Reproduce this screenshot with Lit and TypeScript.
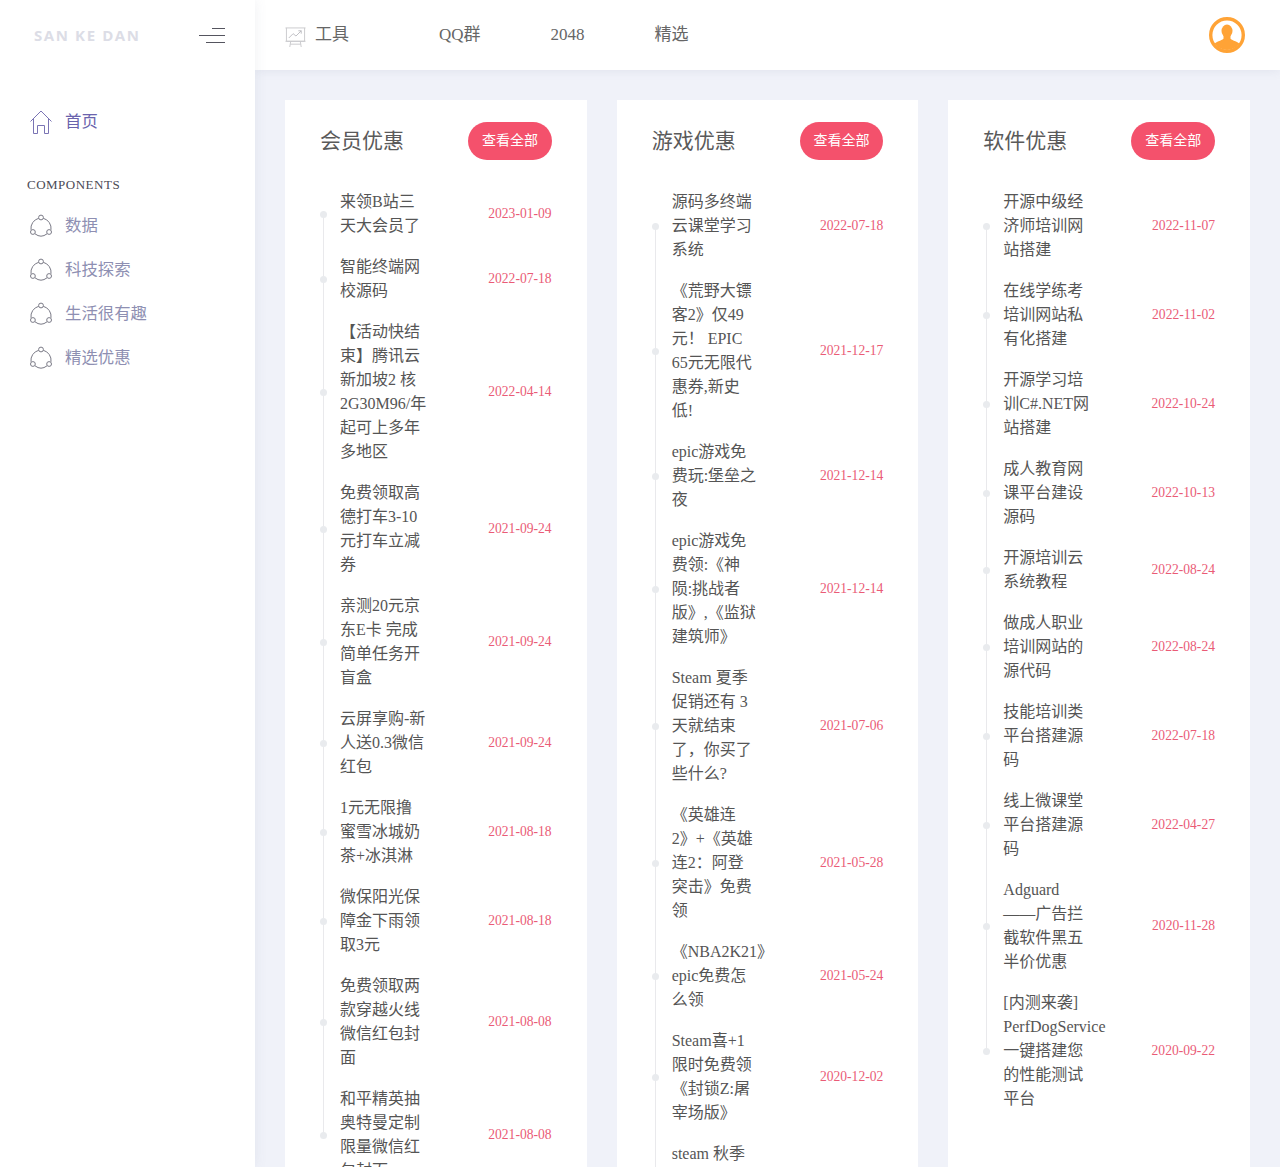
import { LitElement, html, css, svg } from "lit";
import { customElement } from "lit/decorators.js";

type Row = [string, string];
const cards: { title: string; rows: Row[] }[] = [
  {
    title: "会员优惠",
    rows: [
      ["来领B站三|天大会员了", "2023-01-09"],
      ["智能终端网|校源码", "2022-07-18"],
      ["【活动快结|束】腾讯云|新加坡2 核|2G30M96/年|起可上多年|多地区", "2022-04-14"],
      ["免费领取高|德打车3-10|元打车立减|券", "2021-09-24"],
      ["亲测20元京|东E卡 完成|简单任务开|盲盒", "2021-09-24"],
      ["云屏享购-新|人送0.3微信|红包", "2021-09-24"],
      ["1元无限撸|蜜雪冰城奶|茶+冰淇淋", "2021-08-18"],
      ["微保阳光保|障金下雨领|取3元", "2021-08-18"],
      ["免费领取两|款穿越火线|微信红包封|面", "2021-08-08"],
      ["和平精英抽|奥特曼定制|限量微信红|包封面", "2021-08-08"],
    ],
  },
  {
    title: "游戏优惠",
    rows: [
      ["源码多终端|云课堂学习|系统", "2022-07-18"],
      ["《荒野大镖|客2》仅49|元！ EPIC|65元无限代|惠券,新史|低!", "2021-12-17"],
      ["epic游戏免|费玩:堡垒之|夜", "2021-12-14"],
      ["epic游戏免|费领:《神|陨:挑战者|版》,《监狱|建筑师》", "2021-12-14"],
      ["Steam 夏季|促销还有 3|天就结束|了，你买了|些什么?", "2021-07-06"],
      ["《英雄连|2》+《英雄|连2：阿登|突击》免费|领", "2021-05-28"],
      ["《NBA2K21》|epic免费怎|么领", "2021-05-24"],
      ["Steam喜+1|限时免费领|《封锁Z:屠|宰场版》", "2020-12-02"],
      ["steam 秋季|促销开启|多款游戏|史低", "2020-11-26"],
    ],
  },
  {
    title: "软件优惠",
    rows: [
      ["开源中级经|济师培训网|站搭建", "2022-11-07"],
      ["在线学练考|培训网站私|有化搭建", "2022-11-02"],
      ["开源学习培|训C#.NET网|站搭建", "2022-10-24"],
      ["成人教育网|课平台建设|源码", "2022-10-13"],
      ["开源培训云|系统教程", "2022-08-24"],
      ["做成人职业|培训网站的|源代码", "2022-08-24"],
      ["技能培训类|平台搭建源|码", "2022-07-18"],
      ["线上微课堂|平台搭建源|码", "2022-04-27"],
      ["Adguard|——广告拦|截软件黑五|半价优惠", "2020-11-28"],
      ["[内测来袭]|PerfDogService|一键搭建您|的性能测试|平台", "2020-09-22"],
    ],
  },
];

const homeIcon = svg`<svg class="ico" viewBox="0 0 22 24" fill="none" stroke="#7a74b4" stroke-width="1">
  <path d="M.5 11.500 11 1l10.500 10.500"/><path d="M3.500 8.500V23.500H7.500V15.500H14.500V23.500H18.500V8.500"/></svg>`;
const cycleIcon = svg`<svg class="ico" viewBox="0 0 22 24" fill="none" stroke="#7a7a86" stroke-width="1">
  <circle cx="11" cy="3.500" r="2.400"/><circle cx="2.900" cy="18" r="2.400"/><circle cx="19.100" cy="18" r="2.400"/>
  <path d="M8.700 4.300A10.500 10.500 0 0 0 1 15.800M13.300 4.300A10.500 10.500 0 0 1 21 15.800M5 19.800Q11 24.600 17 19.800"/></svg>`;
const chartIcon = svg`<svg class="chart" viewBox="0 0 22 22" fill="none" stroke="#c9c9cd" stroke-width="1">
  <path d="M.5 1.500h21M1.500 1.500v14h19v-14M.5 15.500h21"/><path d="M4 12l4.500-4.500 3 2.500L17 4.500M14 4.500h3v3" stroke="#bdbdc2"/>
  <path d="M6 15.500 5 21.500M16 15.500l1 6M5.500 18.500h11"/></svg>`;
const avatarIcon = svg`<svg class="avatar" viewBox="0 0 36 36">
  <defs><clipPath id="av"><circle cx="18" cy="18" r="15"/></clipPath></defs>
  <circle cx="18" cy="18" r="16.300" fill="#fff" stroke="#ffa336" stroke-width="3.400"/>
  <g clip-path="url(#av)" fill="#ffa336"><ellipse cx="18" cy="14" rx="5.500" ry="6.500"/>
  <path d="M14.500 18.500v3c0 1.500-6 2.500-9.500 5.500v9h26v-9c-3.500-3-9.500-4-9.500-5.500v-3z"/></g></svg>`;

@customElement("app-root")
export class AppRoot extends LitElement {
  static styles = css`
    :host {
      display: block;
      height: 100vh;
      overflow: hidden;
      background: #f0f2f9;
      font-family: "Liberation Serif", "Noto Sans CJK SC", serif;
      color: #555;
    }
    .shell { display: flex; height: 100%; }
    .side {
      width: 255px;
      flex: none;
      background: #fff;
      box-shadow: 0 0 12px rgba(100, 105, 140, 0.1);
      position: relative;
      z-index: 2;
    }
    .brand {
      height: 70px;
      box-sizing: border-box;
      display: flex;
      align-items: center;
      justify-content: space-between;
      padding: 0 30px 0 34px;
    }
    .logo {
      font-family: "Open Sans", sans-serif;
      font-weight: 700;
      font-size: 15px;
      letter-spacing: 1.6px;
      color: #dcdde6;
    }
    .burger { display: flex; flex-direction: column; align-items: flex-end; gap: 6px; width: 26px; }
    .burger i { display: block; height: 1px; background: #55555f; }
    .burger i:nth-child(1) { width: 13px; }
    .burger i:nth-child(2) { width: 26px; }
    .burger i:nth-child(3) { width: 19px; }
    .menu { padding: 29px 0 0 30px; }
    .item {
      display: flex;
      align-items: center;
      gap: 13px;
      height: 44px;
      font-size: 16.400px;
      color: #8e8fb2;
    }
    .item.active { color: #6a63ad; }
    .item span { position: relative; top: -1px; }
    .ico { width: 22px; height: 24px; flex: none; position: relative; top: 1px; }
    .label {
      margin: 23px 0 0 -3px;
      height: 37px;
      display: flex;
      align-items: center;
      font-size: 13px;
      color: #4a4a55;
      letter-spacing: 0.5px;
    }
    .main { flex: 1; min-width: 0; display: flex; flex-direction: column; }
    .top {
      height: 70px;
      flex: none;
      box-sizing: border-box;
      background: #fff;
      box-shadow: 0 1px 10px rgba(100, 105, 140, 0.1);
      display: flex;
      align-items: center;
      gap: 70px;
      padding: 0 35px 0 30px;
      font-size: 17px;
      line-height: 24px;
      color: #666;
    }
    .tool { display: flex; align-items: center; gap: 9px; margin-right: 20px; }
    .chart { width: 21px; height: 22px; position: relative; top: 2px; }
    .avatar { width: 36px; height: 36px; margin-left: auto; }
    .grid {
      display: grid;
      grid-template-columns: repeat(3, 1fr);
      gap: 30px;
      padding: 30px 30px 0;
      flex: 1;
    }
    .card { background: #fff; padding: 22px 35px 0; min-width: 0; }
    .head { display: flex; justify-content: space-between; align-items: center; height: 38px; }
    .head h2 { margin: 0; font-size: 21px; line-height: 30px; font-weight: 400; color: #5a5a5a; }
    .btn {
      width: 83.500px;
      height: 38px;
      box-sizing: border-box;
      padding-bottom: 5px;
      border-radius: 19px;
      background: #f4516c;
      color: #fff;
      font-size: 14px;
      display: flex;
      align-items: center;
      justify-content: center;
    }
    .list { margin: 21.500px 0 0; padding: 0; list-style: none; }
    .row {
      position: relative;
      display: flex;
      align-items: center;
      justify-content: space-between;
      padding: 8.500px 0 8.500px 20px;
    }
    .rail { position: absolute; left: 0; top: 0; bottom: 0; width: 7px; }
    .rail::before {
      content: "";
      position: absolute;
      left: 3px;
      top: 0;
      bottom: 0;
      width: 1px;
      background: #e9e9ec;
    }
    .row:first-child .rail::before { top: 50%; }
    .row:last-child .rail::before { bottom: 50%; }
    .rail::after {
      content: "";
      position: absolute;
      left: 0;
      top: 50%;
      width: 7px;
      height: 7px;
      margin-top: -3.500px;
      border-radius: 50%;
      background: #e9ebee;
    }
    .text { font-size: 16px; line-height: 24px; white-space: nowrap; color: #555; }
    .text div { height: 24px; }
    .date { font-size: 13.600px; color: #ea5b76; }
  `;

  render() {
    return html`<div class="shell">
      <aside class="side">
        <div class="brand">
          <div class="logo">SAN KE DAN</div>
          <div class="burger"><i></i><i></i><i></i></div>
        </div>
        <nav class="menu">
          <div class="item active">${homeIcon}<span>首页</span></div>
          <div class="label">COMPONENTS</div>
          ${["数据", "科技探索", "生活很有趣", "精选优惠"].map(
            (t) => html`<div class="item">${cycleIcon}<span>${t}</span></div>`
          )}
        </nav>
      </aside>
      <div class="main">
        <header class="top">
          <div class="tool">${chartIcon}<span>工具</span></div>
          <span>QQ群</span>
          <span>2048</span>
          <span>精选</span>
          ${avatarIcon}
        </header>
        <section class="grid">
          ${cards.map(
            (c) => html`<article class="card">
              <div class="head"><h2>${c.title}</h2><div class="btn">查看全部</div></div>
              <ul class="list">
                ${c.rows.map(
                  ([t, d]) => html`<li class="row">
                    <span class="rail"></span>
                    <div class="text">${t.split("|").map((l) => html`<div>${l}</div>`)}</div>
                    <div class="date">${d}</div>
                  </li>`
                )}
              </ul>
            </article>`
          )}
        </section>
      </div>
    </div>`;
  }
}
